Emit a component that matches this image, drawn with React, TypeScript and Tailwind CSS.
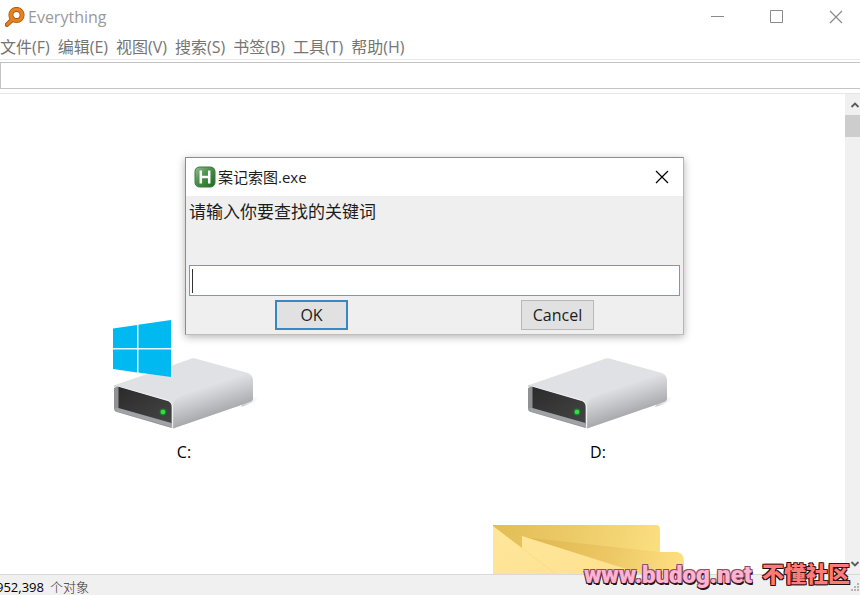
import { useState } from 'react'

const MENU = ['文件(F)', '编辑(E)', '视图(V)', '搜索(S)', '书签(B)', '工具(T)', '帮助(H)']

function SearchLogo() {
  return (
    <svg width="20" height="20" viewBox="0 0 20 20" fill="none" aria-hidden="true">
      <path d="M8 12L2 17.600" stroke="#a85a14" strokeWidth="4.600" strokeLinecap="round" />
      <circle cx="11.500" cy="8" r="5.600" stroke="#a85a14" strokeWidth="5" />
      <path d="M8 12L2.200 17.400" stroke="#e8811f" strokeWidth="2.800" strokeLinecap="round" />
      <circle cx="11.500" cy="8" r="5.600" stroke="#e8811f" strokeWidth="3.400" />
    </svg>
  )
}

function HotkeyLogo() {
  return (
    <svg width="22" height="22" viewBox="0 0 22 22" aria-hidden="true">
      <defs>
        <linearGradient id="hk" x1="0" y1="0" x2="1" y2="1">
          <stop offset="0" stopColor="#93bd92" />
          <stop offset="0.45" stopColor="#4a9049" />
          <stop offset="1" stopColor="#1c6a20" />
        </linearGradient>
      </defs>
      <rect x="1" y="1" width="20" height="20" rx="4.500" fill="url(#hk)" stroke="#3a7a3c" />
      <path d="M6.800 4.500v13M15.200 4.500v13M6.800 11h8.400" stroke="#fff" strokeWidth="2.500" fill="none" />
    </svg>
  )
}

function CloseIcon() {
  return (
    <svg width="14" height="14" viewBox="0 0 14 14" fill="none" stroke="currentColor" strokeWidth="1.200" aria-hidden="true">
      <path d="M1 1l12 12M13 1L1 13" />
    </svg>
  )
}

function Chevron({ down = false }: { down?: boolean }) {
  return (
    <svg width="10" height="8" viewBox="0 0 10 8" fill="none" stroke="#5a5a5a" strokeWidth="1.800" aria-hidden="true">
      <path d={down ? 'M1.500 2L5 5.500L8.500 2' : 'M1.500 6L5 2.500L8.500 6'} />
    </svg>
  )
}

function DriveIcon({ id, windows = false }: { id: string; windows?: boolean }) {
  return (
    <svg width="150" height="112" viewBox="0 0 150 112" className="overflow-visible" aria-hidden="true">
      <defs>
        <linearGradient id={`${id}-side`} gradientUnits="userSpaceOnUse" x1="98" y1="66" x2="107" y2="94">
          <stop offset="0" stopColor="#e0e1e5" />
          <stop offset="0.35" stopColor="#cecfd3" />
          <stop offset="1" stopColor="#a9aaae" />
        </linearGradient>
        <linearGradient id={`${id}-front`} x1="0" y1="0" x2="1" y2="1">
          <stop offset="0" stopColor="#2b2b2b" />
          <stop offset="1" stopColor="#454545" />
        </linearGradient>
        <linearGradient id={`${id}-shadow`} x1="0" y1="0" x2="1" y2="0">
          <stop offset="0" stopColor="#bbb" />
          <stop offset="1" stopColor="#fff" stopOpacity="0" />
        </linearGradient>
      </defs>
      <path d="M138 78L153 77Q147 83 132 87Z" fill={`url(#${id}-shadow)`} />
      {/* case */}
      <path d="M6 65L80 39.500Q84 37.500 88 39L139 53Q144 55 144 60V78Q144 81 141 82L67 107.500Q64 109 61 107.500L8 92Q5 91 5 88V68Q5 65 6 65Z" fill="#e0e1e5" />
      <path d="M64 86Q64 80 72 76L135 55Q144 54 144 61V78Q144 81 141 82L64 108.500Z" fill={`url(#${id}-side)`} />
      {/* front panel */}
      <path d="M7 65Q5 65 5 68V88Q5 91 8 92L61 107.500Q63.500 108.500 63.500 106V86Q63.500 82 59 80.500Z" fill="#909195" />
      <path d="M9.500 66.500L58 80.500Q62.500 82 62.500 86V104.500L9.500 89Z" fill={`url(#${id}-front)`} />
      <path d="M5.500 88L9.500 88L62.500 103V107L8 91.500Z" fill="#a1a2a6" />
      <path d="M5.500 68Q6 65 9 66L58 80Q63.500 82 63.500 87V107.500" fill="none" stroke="#eef0f2" strokeWidth="1.300" />
      <circle cx="54" cy="92" r="3.400" fill="#17842a" />
      <circle cx="54" cy="92" r="2.300" fill="#38dd45" />
      {windows && (
        <g fill="#00b9f1">
          <path d="M4 8.500L28 5V28H4Z" />
          <path d="M29 4.800L62 0V28H29Z" />
          <path d="M4 29H28V52.500L4 49Z" />
          <path d="M29 29H62V57L29 52.500Z" />
          <path d="M4 28.700H62M28.800 4.500V53" stroke="#e6f8fd" strokeWidth="1.400" />
        </g>
      )}
    </svg>
  )
}

function FolderIcon() {
  return (
    <svg width="212" height="150" viewBox="0 0 212 150" aria-hidden="true">
      <defs>
        <linearGradient id="fold-back" x1="0" y1="0" x2="1" y2="0.200">
          <stop offset="0" stopColor="#e2bd55" />
          <stop offset="0.500" stopColor="#edcb69" />
          <stop offset="1" stopColor="#fbdf80" />
        </linearGradient>
        <linearGradient id="fold-mid" gradientUnits="userSpaceOnUse" x1="30" y1="12" x2="190" y2="60">
          <stop offset="0" stopColor="#dfb64e" />
          <stop offset="0.500" stopColor="#ebc662" />
          <stop offset="1" stopColor="#ffe184" />
        </linearGradient>
        <linearGradient id="fold-front" x1="0" y1="0" x2="1" y2="1">
          <stop offset="0" stopColor="#ffe69a" />
          <stop offset="1" stopColor="#fbdc85" />
        </linearGradient>
      </defs>
      <path d="M1 0H164Q168 0 168 5V150H1Z" fill="url(#fold-back)" />
      <path d="M30 12L168 27H185Q192 28 192 36V150H30Z" fill="url(#fold-mid)" />
      <path d="M1 1L30 23V11L150 49L212 70V150H1Z" fill="url(#fold-front)" />
      <path d="M30 23L65 50" stroke="#f8dc88" fill="none" />
    </svg>
  )
}

function InputDialog() {
  const [keyword, setKeyword] = useState('')

  return (
    <form
      role="dialog"
      aria-labelledby="dialog-title"
      onSubmit={e => e.preventDefault()}
      className="absolute left-[185px] top-[157px] w-[499px] border border-[#8c8c8c] border-r-[#b5b5b5] border-b-[#bdbdbd] bg-[#efefef] text-[#1c1c1c] shadow-[0_2px_8px_rgba(0,0,0,0.3)]"
    >
      <div className="flex h-[38px] items-center bg-white pl-2">
        <HotkeyLogo />
        <h2 id="dialog-title" className="ml-0.5 flex-1 text-[15px]">案记索图.exe</h2>
        <button type="button" aria-label="Close" className="mr-3.5 text-black"><CloseIcon /></button>
      </div>
      <div className="flex flex-col px-[3px] pb-1">
        <label htmlFor="keyword" className="h-[69px] pt-1 text-[17px] leading-6">请输入你要查找的关键词</label>
        <div className="flex h-[31px] items-center border border-[#5ba3cb] bg-white pl-0.5">
          <span className="h-6 w-px bg-[#333]" />
          <input
            id="keyword"
            value={keyword}
            onChange={e => setKeyword(e.target.value)}
            className="h-full min-w-0 flex-1 px-1 text-base outline-none"
          />
        </div>
        <div className="mt-1 flex justify-between px-[86px]">
          <button type="submit" className="h-[30px] w-[73px] border-2 border-[#3588c4] bg-[#e1e1e1] text-base leading-6">OK</button>
          <button type="button" className="h-[30px] w-[73px] border border-[#b8b8b8] bg-[#e1e1e1] text-base leading-6">Cancel</button>
        </div>
      </div>
    </form>
  )
}

export default function App() {
  const [query, setQuery] = useState('')

  return (
    <div className="relative flex h-screen flex-col overflow-hidden bg-white font-['Open_Sans','Noto_Sans_CJK_SC',sans-serif]">
      <header className="flex h-[34px] shrink-0 items-center pl-[5px] text-[#8a8a8a]">
        <SearchLogo />
        <h1 className="ml-[3px] flex-1 text-base text-[#9a9a9a]">Everything</h1>
        <div className="flex gap-[45px] pr-[17px]">
          <button type="button" aria-label="Minimize">
            <svg width="14" height="14" viewBox="0 0 14 14" stroke="currentColor" aria-hidden="true"><path d="M0 6.500H13" /></svg>
          </button>
          <button type="button" aria-label="Maximize">
            <svg width="14" height="14" viewBox="0 0 14 14" fill="none" stroke="currentColor" aria-hidden="true"><path d="M0.500 0.500H12.500V12.500H0.500Z" /></svg>
          </button>
          <button type="button" aria-label="Close"><CloseIcon /></button>
        </div>
      </header>

      <nav className="flex h-[26px] shrink-0 items-center gap-2 border-b border-[#e8e8e8] text-base text-[#757575]">
        {MENU.map(item => (
          <button key={item} type="button" className="whitespace-nowrap">{item}</button>
        ))}
      </nav>

      <div className="shrink-0 border-b border-[#e6e6e6] pb-1 pt-0.5">
        <input
          aria-label="搜索"
          value={query}
          onChange={e => setQuery(e.target.value)}
          className="block h-[27px] w-full border border-r-0 border-[#c3c3c3] px-1 text-sm outline-none"
        />
      </div>

      <main className="flex min-h-0 flex-1">
        <div className="grid flex-1 grid-cols-2 content-start gap-x-[46px] gap-y-[61px] overflow-hidden pr-[63px] pt-[226px]">
          <figure className="flex flex-col items-center">
            <DriveIcon id="c" windows />
            <figcaption className="mt-2 text-base leading-6">C:</figcaption>
          </figure>
          <figure className="flex flex-col items-center">
            <DriveIcon id="d" />
            <figcaption className="mt-2 text-base leading-6">D:</figcaption>
          </figure>
          <figure className="col-start-2 flex justify-center">
            <FolderIcon />
          </figure>
        </div>
        <div className="flex w-[15px] flex-col items-end bg-[#f0f0f0]">
          <div className="flex h-[21px] items-center"><Chevron /></div>
          <div className="h-[22px] w-full bg-[#cdcdcd]" />
          <div className="mt-auto flex h-[21px] items-center"><Chevron down /></div>
        </div>
      </main>

      <footer className="flex h-[21px] shrink-0 items-center justify-between border-t border-[#d9d9d9] bg-[#f0f0f0] pt-1">
        <p className="flex items-center gap-1.5 text-[13px] leading-4">
          <span className="-ml-1">952,398</span>
          <span className="font-light text-[#333]">个对象</span>
        </p>
        <svg width="9" height="9" viewBox="0 0 9 9" fill="#b5b5b5" aria-hidden="true">
          <path d="M6 0h2v2h-2zM3 3h2v2h-2zM6 3h2v2h-2zM0 6h2v2h-2zM3 6h2v2h-2zM6 6h2v2h-2z" />
        </svg>
      </footer>

      <InputDialog />

      <p className="absolute bottom-1 right-2.5 flex items-center gap-2.5 whitespace-nowrap font-['Roboto','Noto_Sans_CJK_SC',sans-serif] text-[22px] font-black leading-8">
        <a
          href="http://www.budog.net"
          className="text-2xl text-[#ffb3d1] [text-shadow:-1px_-1px_0_#8d5068,1px_-1px_0_#8d5068,-1px_1px_0_#3a1c28,1px_1px_0_#2a141c,1px_2px_0_#2a141c]"
        >
          www.budog.net
        </a>
        <span className="text-[#ff7b7b] [text-shadow:-1px_-1px_0_#3a1414,1px_-1px_0_#3a1414,-1px_1px_0_#1d1010,1px_1px_0_#1d1010]">不懂社区</span>
      </p>
    </div>
  )
}
